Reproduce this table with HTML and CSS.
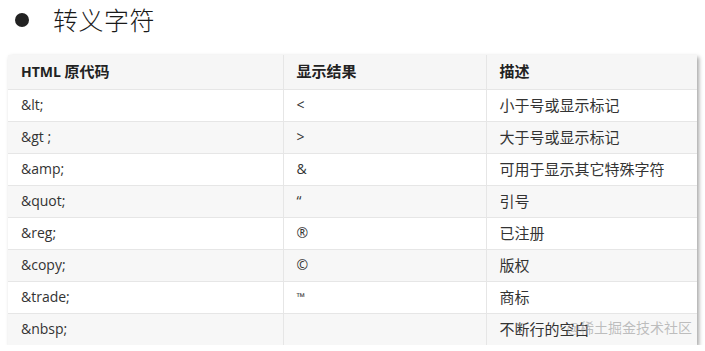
FILE: index.html
```html
<!DOCTYPE html>
<html lang="zh-CN">
<head>
<meta charset="utf-8">
<title>转义字符</title>
<link rel="stylesheet" href="styles.css">
</head>
<body>
<div class="page">
  <h1 class="title"><span class="dot"></span><span class="title-text">转义字符</span></h1>
  <div class="table-wrap">
    <table class="entities">
      <colgroup>
        <col class="c1"><col class="c2"><col class="c3">
      </colgroup>
      <thead>
        <tr><th>HTML <span class="zh">原代码</span></th><th><span class="zh">显示结果</span></th><th><span class="zh">描述</span></th></tr>
      </thead>
      <tbody>
        <tr><td>&amp;lt;</td><td>&lt;</td><td><span class="zh">小于号或显示标记</span></td></tr>
        <tr><td>&amp;gt ;</td><td>&gt;</td><td><span class="zh">大于号或显示标记</span></td></tr>
        <tr><td>&amp;amp;</td><td>&amp;</td><td><span class="zh">可用于显示其它特殊字符</span></td></tr>
        <tr><td>&amp;quot;</td><td>“</td><td><span class="zh">引号</span></td></tr>
        <tr><td>&amp;reg;</td><td>®</td><td><span class="zh">已注册</span></td></tr>
        <tr><td>&amp;copy;</td><td>©</td><td><span class="zh">版权</span></td></tr>
        <tr><td>&amp;trade;</td><td class="small">™</td><td><span class="zh">商标</span></td></tr>
        <tr><td>&amp;nbsp;</td><td></td><td><span class="zh">不断行的空白</span></td></tr>
      </tbody>
    </table>
    <span class="watermark">@稀土掘金技术社区</span>
  </div>
</div>
</body>
</html>
```
FILE: styles.css
```css
html, body {
  margin: 0;
  padding: 0;
  background: #ffffff;
}
body {
  font-family: "Open Sans", "Noto Sans CJK SC", sans-serif;
  color: #333333;
}
.page {
  padding: 0 8px 0 8px;
}
.title {
  margin: 0;
  height: 55px;
  display: flex;
  align-items: center;
  padding-left: 7px;
  padding-bottom: 19px;
  box-sizing: border-box;
  font-weight: 400;
}
.dot {
  width: 14px;
  height: 14px;
  border-radius: 50%;
  background: #222222;
  margin-top: 4px;
}
.title-text {
  margin-left: 24px;
  font-family: "Noto Sans CJK SC", sans-serif;
  font-size: 25px;
  font-weight: 300;
  color: #1a1a1a;
  letter-spacing: 0.5px;
  margin-top: 2px;
}
.table-wrap {
  position: relative;
  width: 689px;
  box-shadow: 2px 2px 4px rgba(0, 0, 0, 0.35);
}
.entities {
  width: 100%;
  border-collapse: collapse;
  table-layout: fixed;
  font-size: 14px;
}
.c1 { width: 275px; }
.c2 { width: 203px; }
.c3 { width: 211px; }
.zh {
  font-family: "Noto Sans CJK SC", sans-serif;
  font-size: 15px;
}
.entities th,
.entities td {
  height: 32px;
  padding: 0 13px;
  text-align: left;
  vertical-align: middle;
  border-right: 1px solid #e6e6e6;
  border-top: 1px solid #e6e6e6;
  box-sizing: border-box;
  color: #333333;
  line-height: 20px;
}
.entities td.small {
  font-size: 11px;
}
.entities th:last-child,
.entities td:last-child {
  border-right: none;
}
.entities th {
  height: 34px;
  font-weight: 700;
  color: #222222;
  border-top: none;
  background: #f6f6f6;
}
.entities tbody tr:nth-child(odd) td {
  background: #ffffff;
}
.entities tbody tr:nth-child(even) td {
  background: #f7f7f7;
}
.watermark {
  position: absolute;
  right: 5px;
  bottom: 8px;
  font-family: "Noto Sans CJK SC", sans-serif;
  font-size: 14px;
  color: rgba(150, 150, 150, 0.6);
  pointer-events: none;
}
```
